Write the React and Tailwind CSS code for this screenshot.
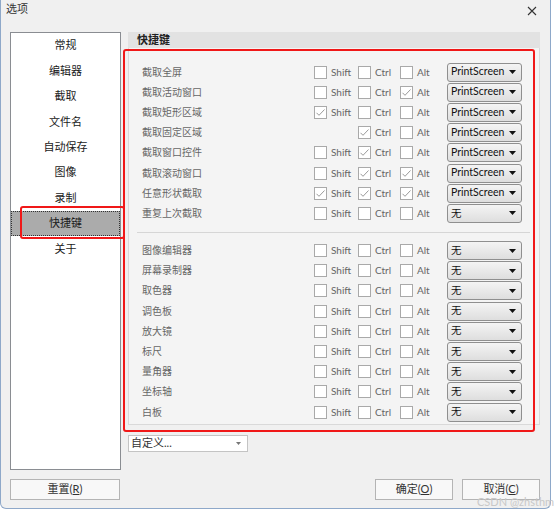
const navItems = ['常规', '编辑器', '截取', '文件名', '自动保存', '图像', '录制', '快捷键', '关于'];

// [label, shift, ctrl, alt, key, hideShift]
const captureRows = [
  ['截取全屏', false, false, false, 'PrintScreen'],
  ['截取活动窗口', false, false, true, 'PrintScreen'],
  ['截取矩形区域', true, false, false, 'PrintScreen'],
  ['截取固定区域', false, true, false, 'PrintScreen', true],
  ['截取窗口控件', false, true, false, 'PrintScreen'],
  ['截取滚动窗口', false, true, true, 'PrintScreen'],
  ['任意形状截取', true, true, true, 'PrintScreen'],
  ['重复上次截取', false, false, false, '无'],
];

const toolRows = ['图像编辑器', '屏幕录制器', '取色器', '调色板', '放大镜', '标尺', '量角器', '坐标轴', '白板'];

const font = { fontFamily: '"Lato", "Noto Sans CJK SC", sans-serif' };

function CheckBox({ checked, label, width, hidden }) {
  return (
    <div className={`flex items-center ${width} ${hidden ? 'invisible' : ''}`}>
      <div className="w-[13px] h-[13px] border border-[#a9a9a9] bg-white flex items-center justify-center">
        {checked && (
          <svg width="11" height="11" viewBox="0 0 11 11">
            <path d="M1.5 5.8 L4 8.3 L9.5 2.5" fill="none" stroke="#9a9a9a" strokeWidth="1" />
          </svg>
        )}
      </div>
      <span className="ml-[4px] text-[10px] text-[#666]">{label}</span>
    </div>
  );
}

function KeySelect({ value }) {
  return (
    <div className="w-[75px] h-[19px] rounded-[3px] border border-[#8f8f8f] bg-linear-to-b from-[#f4f4f4] to-[#dedede] flex items-center justify-between pl-[3px] pr-[5px]">
      <span className="text-[10.5px] text-[#111]">{value}</span>
      <svg width="7" height="4" viewBox="0 0 7 4">
        <path d="M0 0 H7 L3.5 4 Z" fill="#111" />
      </svg>
    </div>
  );
}

function ShortcutRow({ label, shift, ctrl, alt, value, hideShift }) {
  return (
    <div className="flex items-center h-[20.2px] pl-[13px]">
      <span className="w-[172px] text-[10px] text-[#666]">{label}</span>
      <CheckBox checked={shift} label="Shift" width="w-[44px]" hidden={hideShift} />
      <CheckBox checked={ctrl} label="Ctrl" width="w-[42px]" />
      <CheckBox checked={alt} label="Alt" width="w-[47px]" />
      <KeySelect value={value} />
    </div>
  );
}

function DialogButton({ text, mnemonic, width }) {
  return (
    <button className={`${width} h-[21px] border border-[#b4b4b4] bg-[#f8f8f8] text-[11px] text-[#333] flex items-center justify-center`}>
      {text}(<span className="underline">{mnemonic}</span>)
    </button>
  );
}

export default function App() {
  return (
    <div className="w-[554px] h-[514px] bg-white" style={font}>
      <div className="relative w-[551px] h-[509px] bg-[#f0f0f0] border-x border-b border-[#8ea8c9] rounded-b-[6px]">
        {/* Title bar */}
        <div className="h-[32px] flex items-start justify-between pl-[5px] pr-[13px] pt-[1px]">
          <span className="text-[11px] text-[#333]">选项</span>
          <svg width="10" height="10" viewBox="0 0 10 10" className="mt-[5px]">
            <path d="M1 1 L9 9 M9 1 L1 9" stroke="#333" strokeWidth="1.1" />
          </svg>
        </div>

        <div className="flex pl-[9px]">
          {/* Left nav list */}
          <div className="w-[111px] h-[438px] border border-[#8a8d92] bg-white">
            {navItems.map((item) => (
              <div
                key={item}
                className={`h-[25.4px] flex items-center justify-center text-[11px] text-[#1a1a1a] ${
                  item === '快捷键' ? 'bg-[#ababab] border border-dotted border-[#333]' : ''
                }`}
              >
                {item}
              </div>
            ))}
          </div>

          {/* Right panel */}
          <div className="ml-[7px] w-[412px] flex flex-col">
            <div className="h-[16px] bg-[#e2e2e2] flex items-center pl-[9px]">
              <span className="text-[11px] font-bold text-[#222]">快捷键</span>
            </div>
            <div className="h-[377px] border border-[#d9d9d9] border-t-0 bg-[#f4f4f4] pt-[14px]">
              {captureRows.map(([label, s, c, a, v, h]) => (
                <ShortcutRow key={label} label={label} shift={s} ctrl={c} alt={a} value={v} hideShift={h} />
              ))}
              <div className="ml-[8px] mr-[9px] mt-[8px] mb-[8px] h-px bg-[#d6d6d6]" />
              {toolRows.map((label) => (
                <ShortcutRow key={label} label={label} value="无" />
              ))}
            </div>
            <div className="mt-[10px] w-[120px] h-[17px] border border-[#c4c4c4] bg-white flex items-center justify-between pl-[2px] pr-[6px]">
              <span className="text-[11px] text-[#333]">自定义...</span>
              <svg width="5" height="3" viewBox="0 0 5 3">
                <path d="M0 0 H5 L2.5 3 Z" fill="#777" />
              </svg>
            </div>
          </div>
        </div>

        {/* Bottom buttons */}
        <div className="mt-[9px] flex items-center justify-between pl-[9px] pr-[10px]">
          <DialogButton text="重置" mnemonic="R" width="w-[110px]" />
          <div className="flex gap-[9px]">
            <DialogButton text="确定" mnemonic="O" width="w-[78px]" />
            <DialogButton text="取消" mnemonic="C" width="w-[78px]" />
          </div>
        </div>

        {/* Red annotation boxes */}
        <div className="absolute left-[122px] top-[49px] w-[412px] h-[383px] border-2 border-[#f01818] rounded-[3px] pointer-events-none" />
        <div className="absolute left-[19px] top-[206px] w-[105px] h-[33px] border-2 border-[#f01818] rounded-[3px] pointer-events-none" />

        {/* Watermark */}
        <span className="absolute left-[476px] top-[494px] text-[11px] text-[#c8c8c8] whitespace-nowrap">CSDN @zhsthm</span>
      </div>
    </div>
  );
}
